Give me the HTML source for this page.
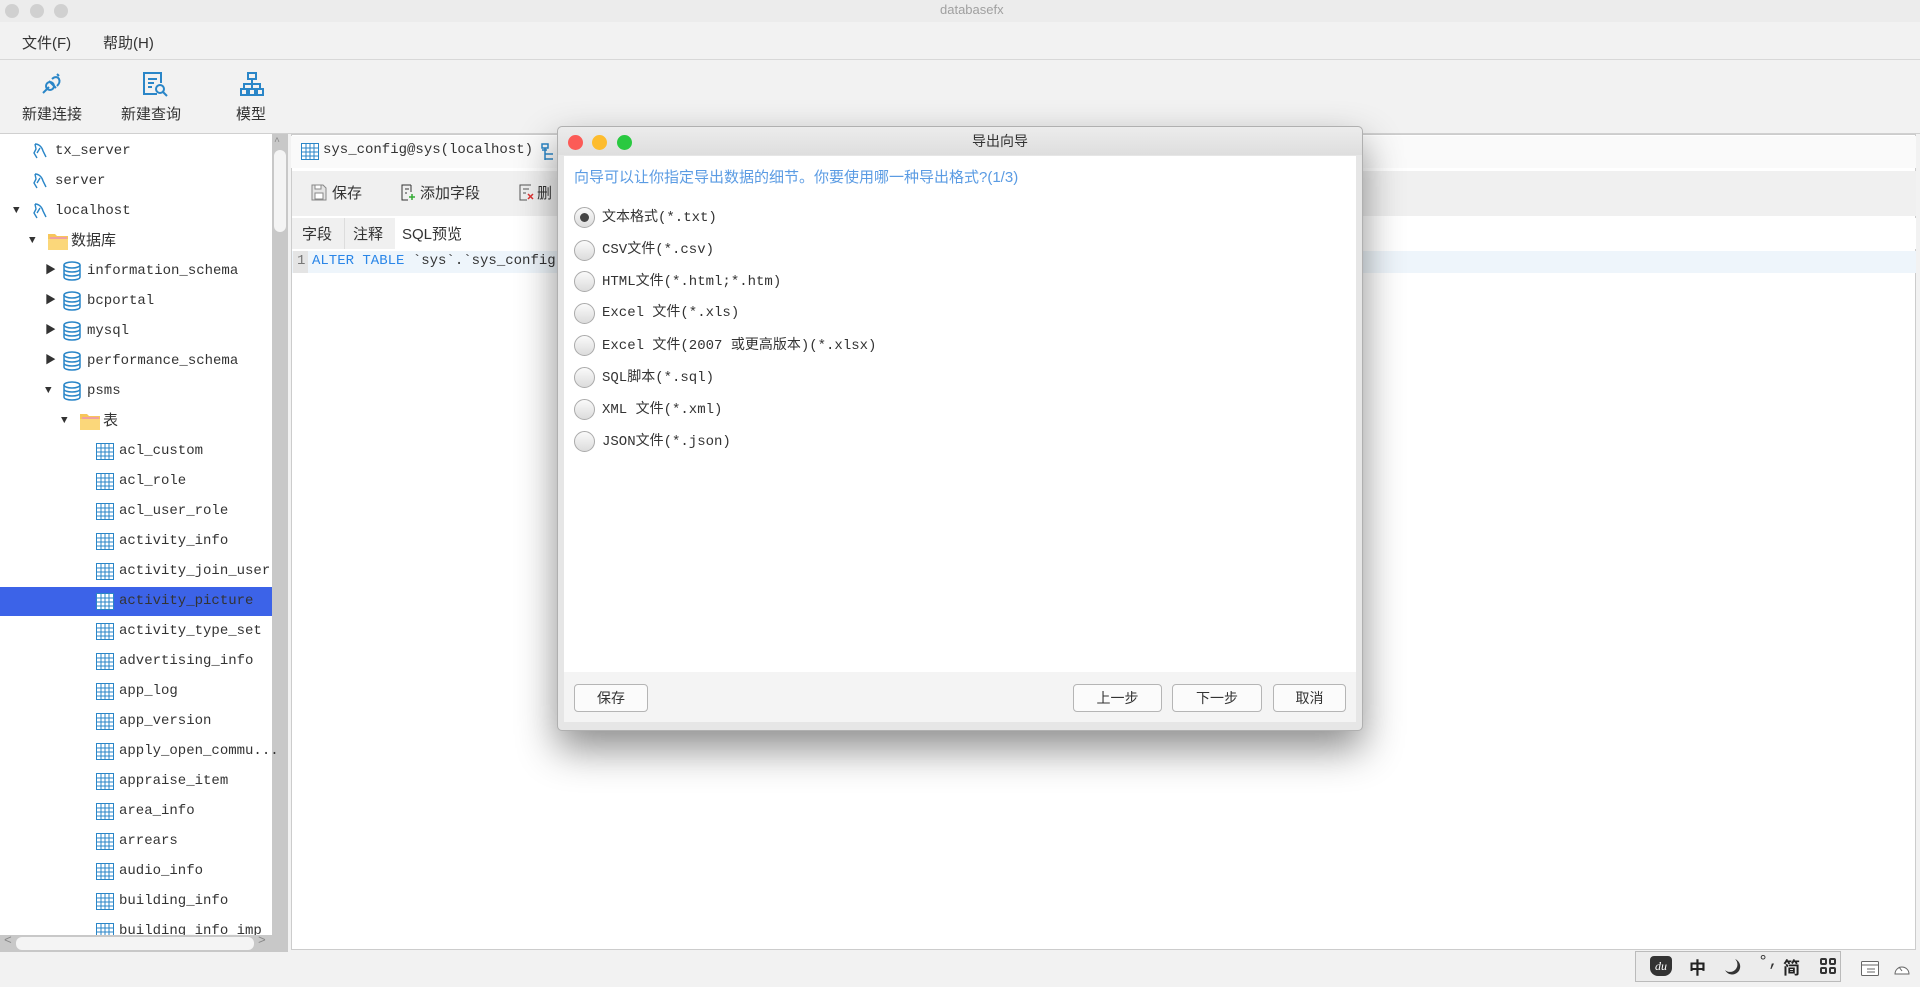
<!DOCTYPE html>
<html><head><meta charset="utf-8">
<style>
*{margin:0;padding:0;box-sizing:border-box}
body{width:1920px;height:987px;overflow:hidden;background:#f2f2f2;font-family:"Liberation Mono","Noto Sans CJK SC",monospace;font-size:14px;color:#333;position:relative}
.a{position:absolute;white-space:nowrap}
.cj{font-family:"Liberation Sans","Noto Sans CJK SC",sans-serif}
.dot{position:absolute;width:14px;height:14px;border-radius:50%}
.row{position:absolute;height:30px;line-height:30px;left:0;width:272px}
.radio{position:absolute;left:574px;width:21px;height:21px;border-radius:50%;border:1px solid #aaa;background:linear-gradient(#fafafa,#dcdcdc)}
.rt{position:absolute;left:602px;line-height:20px}
.btn{position:absolute;top:684px;height:28px;border:1px solid #b5b5b5;border-radius:4px;background:#fbfbfb;text-align:center;line-height:26px;font-size:14px}
</style></head><body>
<div class="a" style="left:0;top:0;width:1920px;height:22px;background:#ececec"></div>
<div class="dot" style="left:5px;top:4px;background:#d0d0d0"></div>
<div class="dot" style="left:30px;top:4px;background:#d0d0d0"></div>
<div class="dot" style="left:54px;top:4px;background:#d0d0d0"></div>
<div class="a cj" style="left:940px;top:2px;font-size:13px;color:#a0a0a0">databasefx</div>
<div class="a" style="left:0;top:22px;width:1920px;height:38px;background:#f2f2f2;border-bottom:1px solid #d8d8d8"></div>
<div class="a cj" style="left:22px;top:32px;font-size:15px;color:#333">文件(F)</div>
<div class="a cj" style="left:103px;top:32px;font-size:15px;color:#333">帮助(H)</div>
<div class="a" style="left:0;top:61px;width:1920px;height:73px;background:#f2f2f2;border-bottom:1px solid #d0d0d0"></div>
<svg class="a" style="left:40px;top:71px" width="26" height="24" viewBox="0 0 26 24" fill="none" stroke="#2a86c8" stroke-width="2"><path d="M5 20l4-4M9 10l7 7M12 8c3-3 6-2 7 0s1 4-2 7M17 3l2 2M3 22l2-2"/><circle cx="10" cy="15" r="4"/></svg>
<svg class="a" style="left:141px;top:71px" width="28" height="26" viewBox="0 0 28 26" fill="none" stroke="#2a86c8" stroke-width="2"><path d="M16 23H3V2h17v10"/><path d="M7 8h9M7 12h6M7 16h4"/><circle cx="19" cy="18" r="4"/><path d="M22 21l4 4"/></svg>
<svg class="a" style="left:239px;top:71px" width="26" height="26" viewBox="0 0 26 26" fill="none" stroke="#2a86c8" stroke-width="2"><rect x="9" y="2" width="8" height="6"/><rect x="2" y="18" width="6" height="6"/><rect x="10" y="18" width="6" height="6"/><rect x="18" y="18" width="6" height="6"/><path d="M13 8v5M5 18v-5h16v5M13 13v5"/></svg>
<div class="a cj" style="left:22px;top:103px;font-size:15px">新建连接</div>
<div class="a cj" style="left:121px;top:103px;font-size:15px">新建查询</div>
<div class="a cj" style="left:236px;top:103px;font-size:15px">模型</div>
<div class="a" style="left:0;top:134px;width:272px;height:801px;background:#fff"></div>
<div class="a" style="left:272px;top:134px;width:16px;height:801px;background:#c8c8c8"></div>
<div class="a" style="left:274px;top:150px;width:12px;height:82px;background:#f4f4f4;border-radius:6px"></div>
<div class="a" style="left:274px;top:137px;font-size:10px;color:#888">^</div>
<div class="a" style="left:0;top:935px;width:288px;height:17px;background:#c8c8c8"></div>
<div class="a" style="left:16px;top:937px;width:238px;height:13px;background:#f4f4f4;border-radius:6px"></div>
<div class="a" style="left:4px;top:933px;font-size:13px;color:#888">&lt;</div>
<div class="a" style="left:258px;top:933px;font-size:13px;color:#888">&gt;</div>
<div class="a" style="left:0;top:587px;width:272px;height:29px;background:#3c63e8"></div>
<div class="a" style="left:291px;top:134px;width:1625px;height:816px;background:#fff;border:1px solid #ccc"></div>
<div class="a" style="left:291px;top:136px;width:1625px;height:32px;background:#fafafa"></div>
<svg class="a" style="left:301px;top:143px" width="18" height="17"><rect x="0.5" y="0.5" width="17" height="16" fill="#fff" stroke="#2a86c8"/><path d="M0 5h18M0 9h18M0 13h18M5 0v17M9 0v17M13 0v17" stroke="#2a86c8"/></svg>
<div class="a" style="left:323px;top:142px">sys_config@sys(localhost)</div>
<svg class="a" style="left:541px;top:143px" width="16" height="18"><path d="M1 1h6v4H1zM1 7h5M4 5v12M4 11h8M4 16h8" stroke="#2a86c8" fill="none" stroke-width="1.5"/></svg>
<div class="a" style="left:292px;top:171px;width:1624px;height:45px;background:#f0f0f0"></div>
<svg class="a" style="left:311px;top:184px" width="16" height="17"><path d="M1 1h11l3 3v12H1z" fill="#e4e4e4" stroke="#888"/><rect x="4" y="9" width="8" height="6" fill="#fff" stroke="#888"/><rect x="4" y="1" width="6" height="4" fill="#fff" stroke="#888"/></svg>
<div class="a cj" style="left:332px;top:182px;font-size:15px">保存</div>
<svg class="a" style="left:401px;top:184px" width="14" height="17"><path d="M10 1H1v15h6M10 1v7M4 5h4M4 9h2" stroke="#333" fill="none"/><path d="M11 10v6M8 13h6" stroke="#3a3" stroke-width="1.5"/></svg>
<div class="a cj" style="left:420px;top:182px;font-size:15px">添加字段</div>
<svg class="a" style="left:519px;top:184px" width="16" height="17"><path d="M12 1H1v15h7M4 5h6M4 9h3" stroke="#555" fill="none"/><path d="M9 10l5 5M14 10l-5 5" stroke="#d33" stroke-width="1.5"/></svg>
<div class="a cj" style="left:537px;top:182px;font-size:15px">删</div>
<div class="a" style="left:292px;top:218px;width:1624px;height:31px;background:#fff"></div>
<div class="a" style="left:292px;top:218px;width:53px;height:31px;background:#f0f0f0;border-right:1px solid #ddd"></div>
<div class="a" style="left:345px;top:218px;width:50px;height:31px;background:#f0f0f0"></div>
<div class="a cj" style="left:302px;top:223px;font-size:15px">字段</div>
<div class="a cj" style="left:353px;top:223px;font-size:15px">注释</div>
<div class="a cj" style="left:402px;top:223px;font-size:15px">SQL预览</div>
<div class="a" style="left:292px;top:251px;width:1624px;height:22px;background:#eef5fb"></div>
<div class="a" style="left:293px;top:251px;width:15px;height:22px;background:#e4e4e4"></div>
<div class="a" style="left:297px;top:253px;color:#777">1</div>
<div class="a" style="left:312px;top:253px;color:#333"><span style="color:#2a86e8">ALTER TABLE</span> `sys`.`sys_config`M</div>
<!-- status -->
<div class="a" style="left:1635px;top:951px;width:206px;height:31px;background:#ececec;border:1px solid #bbb"></div>
<div class="a" style="left:1650px;top:956px;width:22px;height:20px;background:#333;border-radius:4px 4px 8px 8px;color:#fff;font-size:12px;font-style:italic;text-align:center;line-height:20px;font-family:'Liberation Serif',serif">du</div>
<div class="a cj" style="left:1689px;top:954px;font-size:17px;color:#222;font-weight:bold">中</div>
<svg class="a" style="left:1723px;top:957px" width="18" height="18"><path d="M12 2a8 8 0 1 1-10 11 7 7 0 0 0 10-11z" fill="#333"/></svg>
<div class="a" style="left:1758px;top:953px;font-size:17px;color:#333">°,</div>
<div class="a cj" style="left:1783px;top:954px;font-size:17px;color:#222;font-weight:bold">简</div>
<svg class="a" style="left:1820px;top:958px" width="16" height="16" fill="none" stroke="#333" stroke-width="2"><rect x="1" y="1" width="5" height="5" rx="1"/><rect x="10" y="1" width="5" height="5" rx="1"/><rect x="1" y="10" width="5" height="5" rx="1"/><rect x="10" y="10" width="5" height="5" rx="1"/></svg>
<svg class="a" style="left:1861px;top:961px" width="18" height="15"><rect x="0.5" y="0.5" width="17" height="14" rx="1" fill="#fff" stroke="#666"/><path d="M1 4h16M6 8h8M6 11h8" stroke="#666"/></svg>
<svg class="a" style="left:1893px;top:960px" width="18" height="16"><path d="M2 14a7 7 0 1 1 14 0z" fill="#fff" stroke="#666"/><path d="M9 11l-3-4" stroke="#666"/></svg>
<!-- dialog -->
<div class="a" style="left:557px;top:126px;width:806px;height:605px;background:#e6e6e6;border:1px solid #b0b0b0;border-radius:5px;box-shadow:0 18px 40px rgba(0,0,0,.45)"></div>
<div class="a" style="left:558px;top:127px;width:804px;height:28px;background:linear-gradient(#ececec,#dedede);border-radius:5px 5px 0 0"></div>
<div class="dot" style="left:568px;top:135px;width:15px;height:15px;background:#fc5b57"></div>
<div class="dot" style="left:592px;top:135px;width:15px;height:15px;background:#fdbc2e"></div>
<div class="dot" style="left:617px;top:135px;width:15px;height:15px;background:#29c940"></div>
<div class="a cj" style="left:972px;top:131px;font-size:14px;color:#333">导出向导</div>
<div class="a" style="left:564px;top:156px;width:792px;height:516px;background:#fff"></div>
<div class="a" style="left:564px;top:672px;width:792px;height:50px;background:#f4f4f4"></div>
<div class="a cj" style="left:574px;top:166px;font-size:15px;color:#5a9be3">向导可以让你指定导出数据的细节。你要使用哪一种导出格式?(1/3)</div>
<div class="radio" style="top:207px"><div style="position:absolute;left:5px;top:5px;width:9px;height:9px;border-radius:50%;background:#444"></div></div>
<div class="radio" style="top:240px"></div>
<div class="radio" style="top:271px"></div>
<div class="radio" style="top:303px"></div>
<div class="radio" style="top:335px"></div>
<div class="radio" style="top:367px"></div>
<div class="radio" style="top:399px"></div>
<div class="radio" style="top:431px"></div>
<div class="rt" style="top:208px">文本格式(*.txt)</div>
<div class="rt" style="top:240px">CSV文件(*.csv)</div>
<div class="rt" style="top:272px">HTML文件(*.html;*.htm)</div>
<div class="rt" style="top:303px">Excel 文件(*.xls)</div>
<div class="rt" style="top:336px">Excel 文件(2007 或更高版本)(*.xlsx)</div>
<div class="rt" style="top:368px">SQL脚本(*.sql)</div>
<div class="rt" style="top:400px">XML 文件(*.xml)</div>
<div class="rt" style="top:432px">JSON文件(*.json)</div>
<div class="btn cj" style="left:574px;width:74px">保存</div>
<div class="btn cj" style="left:1073px;width:89px">上一步</div>
<div class="btn cj" style="left:1172px;width:90px">下一步</div>
<div class="btn cj" style="left:1273px;width:73px">取消</div>

<svg width="0" height="0" style="position:absolute"><defs>
<symbol id="dol" viewBox="0 0 16 18"><path d="M3 2c4 0 7 3 8 7l3 6M3 2l1 5-2 4 3 5M8 6l-3 5" fill="none" stroke="#2a86c8" stroke-width="1.4"/></symbol>
<symbol id="tbl" viewBox="0 0 18 17"><rect x="0.5" y="0.5" width="17" height="16" fill="#fff" stroke="#2a86c8"/><path d="M0 5h18M0 9h18M0 13h18M5 0v17M9 0v17M13 0v17" stroke="#2a86c8"/></symbol>
<symbol id="db" viewBox="0 0 18 20"><ellipse cx="9" cy="4" rx="8" ry="3" fill="#fff" stroke="#2a86c8" stroke-width="1.5"/><path d="M1 4v12c0 4 16 4 16 0V4M1 8c0 4 16 4 16 0M1 12c0 4 16 4 16 0" fill="none" stroke="#2a86c8" stroke-width="1.5"/></symbol>
<symbol id="fld" viewBox="0 0 22 20"><path d="M1 3h7l2 2h11v14H1z" fill="#f7c65a"/><path d="M3 6h17v3H3z" fill="#f0a0a0"/><path d="M1 8h20v11H1z" fill="#fbd77a"/></symbol>
</defs></svg>
<div style="position:absolute;left:0;top:0">
<div class="row" style="top:136px"><svg class="a" style="left:32px;top:6px" width="16" height="18"><use href="#dol"/></svg><span class="a" style="left:55px">tx_server</span></div>
<div class="row" style="top:166px"><svg class="a" style="left:32px;top:6px" width="16" height="18"><use href="#dol"/></svg><span class="a" style="left:55px">server</span></div>
<div class="row" style="top:196px"><span class="a" style="left:13px;font-size:11px">▼</span><svg class="a" style="left:32px;top:6px" width="16" height="18"><use href="#dol"/></svg><span class="a" style="left:55px">localhost</span></div>
<div class="row" style="top:226px"><span class="a" style="left:29px;font-size:11px">▼</span><svg class="a" style="left:47px;top:5px" width="22" height="20"><use href="#fld"/></svg><span class="a cj" style="left:71px;font-size:15px">数据库</span></div>
<div class="row" style="top:256px"><span class="a" style="left:45px;font-size:11px">▶</span><svg class="a" style="left:63px;top:5px" width="18" height="20"><use href="#db"/></svg><span class="a" style="left:87px">information_schema</span></div>
<div class="row" style="top:286px"><span class="a" style="left:45px;font-size:11px">▶</span><svg class="a" style="left:63px;top:5px" width="18" height="20"><use href="#db"/></svg><span class="a" style="left:87px">bcportal</span></div>
<div class="row" style="top:316px"><span class="a" style="left:45px;font-size:11px">▶</span><svg class="a" style="left:63px;top:5px" width="18" height="20"><use href="#db"/></svg><span class="a" style="left:87px">mysql</span></div>
<div class="row" style="top:346px"><span class="a" style="left:45px;font-size:11px">▶</span><svg class="a" style="left:63px;top:5px" width="18" height="20"><use href="#db"/></svg><span class="a" style="left:87px">performance_schema</span></div>
<div class="row" style="top:376px"><span class="a" style="left:45px;font-size:11px">▼</span><svg class="a" style="left:63px;top:5px" width="18" height="20"><use href="#db"/></svg><span class="a" style="left:87px">psms</span></div>
<div class="row" style="top:406px"><span class="a" style="left:61px;font-size:11px">▼</span><svg class="a" style="left:79px;top:5px" width="22" height="20"><use href="#fld"/></svg><span class="a cj" style="left:103px;font-size:15px">表</span></div>
<div class="row" style="top:436px"><svg class="a" style="left:96px;top:7px" width="18" height="17"><use href="#tbl"/></svg><span class="a" style="left:119px">acl_custom</span></div>
<div class="row" style="top:466px"><svg class="a" style="left:96px;top:7px" width="18" height="17"><use href="#tbl"/></svg><span class="a" style="left:119px">acl_role</span></div>
<div class="row" style="top:496px"><svg class="a" style="left:96px;top:7px" width="18" height="17"><use href="#tbl"/></svg><span class="a" style="left:119px">acl_user_role</span></div>
<div class="row" style="top:526px"><svg class="a" style="left:96px;top:7px" width="18" height="17"><use href="#tbl"/></svg><span class="a" style="left:119px">activity_info</span></div>
<div class="row" style="top:556px"><svg class="a" style="left:96px;top:7px" width="18" height="17"><use href="#tbl"/></svg><span class="a" style="left:119px">activity_join_user</span></div>
<div class="row" style="top:586px"><svg class="a" style="left:96px;top:7px" width="18" height="17"><use href="#tbl"/></svg><span class="a" style="left:119px">activity_picture</span></div>
<div class="row" style="top:616px"><svg class="a" style="left:96px;top:7px" width="18" height="17"><use href="#tbl"/></svg><span class="a" style="left:119px">activity_type_set</span></div>
<div class="row" style="top:646px"><svg class="a" style="left:96px;top:7px" width="18" height="17"><use href="#tbl"/></svg><span class="a" style="left:119px">advertising_info</span></div>
<div class="row" style="top:676px"><svg class="a" style="left:96px;top:7px" width="18" height="17"><use href="#tbl"/></svg><span class="a" style="left:119px">app_log</span></div>
<div class="row" style="top:706px"><svg class="a" style="left:96px;top:7px" width="18" height="17"><use href="#tbl"/></svg><span class="a" style="left:119px">app_version</span></div>
<div class="row" style="top:736px"><svg class="a" style="left:96px;top:7px" width="18" height="17"><use href="#tbl"/></svg><span class="a" style="left:119px">apply_open_commu...</span></div>
<div class="row" style="top:766px"><svg class="a" style="left:96px;top:7px" width="18" height="17"><use href="#tbl"/></svg><span class="a" style="left:119px">appraise_item</span></div>
<div class="row" style="top:796px"><svg class="a" style="left:96px;top:7px" width="18" height="17"><use href="#tbl"/></svg><span class="a" style="left:119px">area_info</span></div>
<div class="row" style="top:826px"><svg class="a" style="left:96px;top:7px" width="18" height="17"><use href="#tbl"/></svg><span class="a" style="left:119px">arrears</span></div>
<div class="row" style="top:856px"><svg class="a" style="left:96px;top:7px" width="18" height="17"><use href="#tbl"/></svg><span class="a" style="left:119px">audio_info</span></div>
<div class="row" style="top:886px"><svg class="a" style="left:96px;top:7px" width="18" height="17"><use href="#tbl"/></svg><span class="a" style="left:119px">building_info</span></div>
<div class="row" style="top:916px;height:19px;overflow:hidden"><svg class="a" style="left:96px;top:7px" width="18" height="17"><use href="#tbl"/></svg><span class="a" style="left:119px">building_info_imp</span></div>
</div>
</body></html>
